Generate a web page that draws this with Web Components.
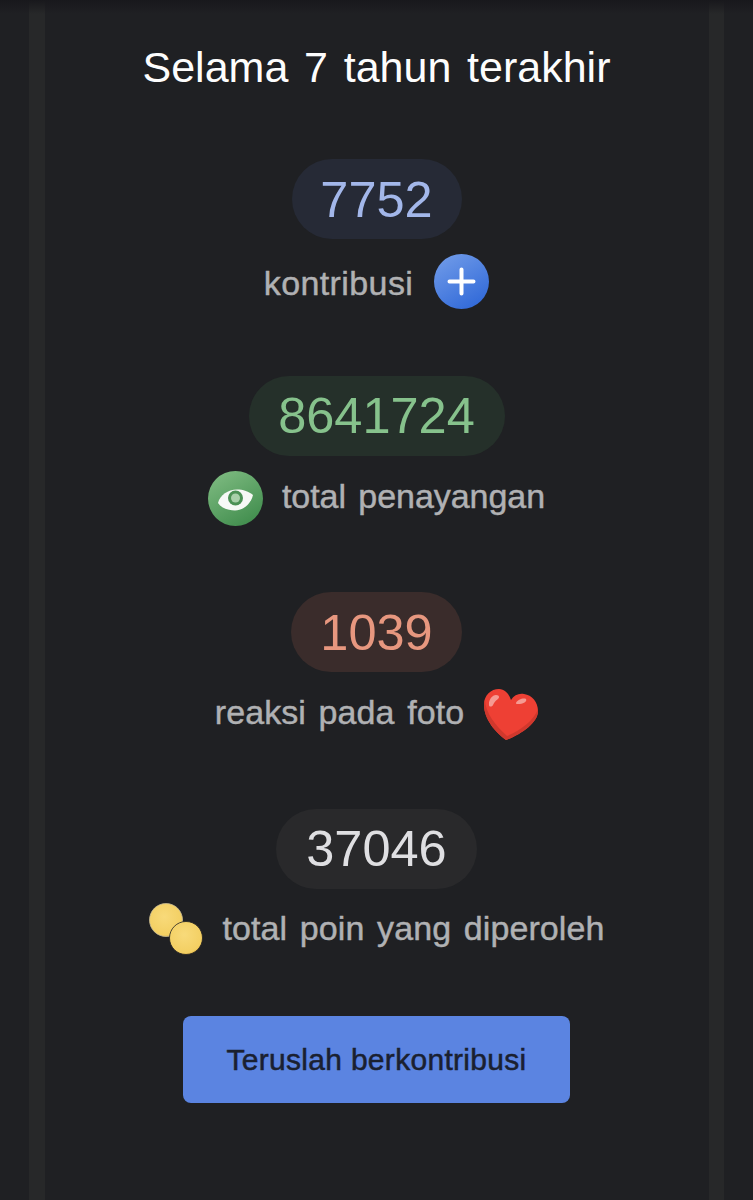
<!DOCTYPE html>
<html lang="id">
<head>
<meta charset="utf-8">
<title>Selama 7 tahun terakhir</title>
<style>
  html, body { margin: 0; background: #1f2023; }
  body { font-family: "Liberation Sans", Arial, sans-serif; }
</style>
</head>
<body>
<recap-page>
  <stat-block value="7752" tone="blue" label="kontribusi" pill-width="170" gap="21" style="--label-spacing: 0.4px; --label-top: 4px; --label-bottom: 0px">
    <stat-icon slot="after" name="plus"></stat-icon>
  </stat-block>
  <stat-block value="8641724" tone="green" label="total penayangan" pill-width="256" gap="19" style="--label-spacing: -0.05px">
    <stat-icon slot="before" name="eye"></stat-icon>
  </stat-block>
  <stat-block value="1039" tone="red" label="reaksi pada foto" pill-width="171" gap="20">
    <stat-icon slot="after" name="heart"></stat-icon>
  </stat-block>
  <stat-block value="37046" tone="grey" label="total poin yang diperoleh" pill-width="201" gap="20" style="--label-bottom: 6px">
    <stat-icon slot="before" name="coins"></stat-icon>
  </stat-block>
</recap-page>

<script>
class RecapPage extends HTMLElement {
  constructor() {
    super();
    this.attachShadow({ mode: "open" }).innerHTML = `
      <style>
        :host {
          display: grid;
          grid-template-columns: 29px 16px 1fr 15px 29px;
          height: 1200px;
          overflow: hidden;
          background: #1f2023;
          position: relative;
        }
        .strip { background: #272829; }
        .shade {
          position: absolute;
          inset: 0 0 auto 0;
          height: 14px;
          background: linear-gradient(#18181c, rgba(24, 24, 28, 0));
        }
        main {
          display: flex;
          flex-direction: column;
          align-items: center;
          min-width: 0;
          padding-right: 1px;
        }
        h1 {
          margin: 42px 0 0;
          font: 400 43px/50px "Liberation Sans", Arial, sans-serif;
          word-spacing: 3.8px;
          color: #fdfdfd;
          white-space: nowrap;
        }
        .stats {
          display: flex;
          flex-direction: column;
          align-items: center;
          gap: 66.67px;
          margin-top: 67px;
          width: 100%;
        }
        recap-button { margin-top: 57px; }
      </style>
      <div></div>
      <div class="strip"></div>
      <main>
        <h1>Selama 7 tahun terakhir</h1>
        <div class="stats"><slot></slot></div>
        <recap-button>Teruslah berkontribusi</recap-button>
      </main>
      <div class="strip"></div>
      <div></div>
      <div class="shade"></div>
    `;
  }
}

const TONES = {
  blue: { bg: "#262a36", fg: "#a3b7ea" },
  green: { bg: "#25302a", fg: "#86c28c" },
  red: { bg: "#3a2c2b", fg: "#e7977f" },
  grey: { bg: "#29292b", fg: "#dfdfe2" },
};

class StatBlock extends HTMLElement {
  constructor() {
    super();
    this.attachShadow({ mode: "open" }).innerHTML = `
      <style>
        :host {
          display: flex;
          flex-direction: column;
          align-items: center;
          width: 100%;
        }
        .pill {
          display: flex;
          align-items: center;
          justify-content: center;
          box-sizing: border-box;
          height: 80px;
          padding-top: 1px;
          border-radius: 40px;
          font-size: 50.5px;
          line-height: 78px;
        }
        .row {
          display: flex;
          align-items: center;
          height: 55px;
          margin-top: 15px;
          font-size: 34px;
          letter-spacing: var(--label-spacing, 0.1px);
          word-spacing: 3px;
          -webkit-text-stroke: 0.45px #b0b1b3;
          color: #b0b1b3;
          white-space: nowrap;
        }
        .label {
          margin-top: var(--label-top, 0);
          margin-bottom: var(--label-bottom, 4px);
        }
      </style>
      <div class="pill"></div>
      <div class="row">
        <slot name="before"></slot>
        <span class="label"></span>
        <slot name="after"></slot>
      </div>
    `;
  }

  connectedCallback() {
    const tone = TONES[this.getAttribute("tone")];
    const pill = this.shadowRoot.querySelector(".pill");
    pill.textContent = this.getAttribute("value");
    pill.style.width = this.getAttribute("pill-width") + "px";
    pill.style.background = tone.bg;
    pill.style.color = tone.fg;
    this.shadowRoot.querySelector(".label").textContent = this.getAttribute("label");
    this.shadowRoot.querySelector(".row").style.gap = this.getAttribute("gap") + "px";
  }
}

const ICONS = {
  plus: `<svg viewBox="0 0 55 55" width="55" height="55">
      <defs><linearGradient id="g" x1="0.2" y1="0" x2="0.8" y2="1">
        <stop offset="0" stop-color="#6f9ae8"/><stop offset="1" stop-color="#2f68d8"/>
      </linearGradient></defs>
      <circle cx="27.500" cy="27.500" r="27.500" fill="url(#g)"/>
      <path d="M27.500 15.500v24M15.500 27.500h24" stroke="#fff" stroke-width="4" stroke-linecap="round"/>
    </svg>`,
  eye: `<svg viewBox="0 0 55 55" width="55" height="55">
      <defs><linearGradient id="g" x1="0.2" y1="0" x2="0.8" y2="1">
        <stop offset="0" stop-color="#7dba80"/><stop offset="1" stop-color="#3f8c4c"/>
      </linearGradient></defs>
      <circle cx="27.500" cy="27.500" r="27.500" fill="url(#g)"/>
      <path d="M10 32C12 24 20 18.500 29 18.500c6 0 12 2 16 5.500-2 9-10 15.500-18 15.500-7 0-14-2.500-17-7.500z" fill="#f7f9f6"/>
      <circle cx="27.500" cy="27" r="7.500" fill="#4c9155"/>
      <circle cx="27.500" cy="27" r="4.500" fill="#a9d0aa"/>
    </svg>`,
  heart: `<svg viewBox="0 0 54 52" width="54" height="52">
      <path d="M22 51C12 44 0 30 0 16 0 6 7 0 15 0c6 0 10 5 12 11 3-5 8-7 13-6 8 1 14 8 14 17 0 12-18 24-32 29z" fill="#ee4034"/>
      <path d="M22 51C12 44 0 30 0 16c0-2 .3-4 1-6 0 14 11 27 22 37 12-5 27-15 31-27 .2 1 0 2 0 2 0 12-18 24-32 29z" fill="#d0382d"/>
      <path d="M5 16c-.5-5 3-10 7-10 3 0 4 2 2 4-3 2-4 4-5 6-1 2-4 2-4 0zM32 14c1-3 6-5 9-4.500 2 .5 1.500 3-.5 4-2 1-4 1.500-7 1.500-1 0-2-.5-1.500-1z" fill="#f59a92"/>
    </svg>`,
  coins: `<svg viewBox="0 0 54 52" width="54" height="52">
      <defs>
        <radialGradient id="g" cx="0.45" cy="0.4" r="0.65">
          <stop offset="0" stop-color="#f8da7a"/><stop offset="0.85" stop-color="#f3cf62"/><stop offset="1" stop-color="#d6a536"/>
        </radialGradient>
      </defs>
      <circle cx="17" cy="17" r="16.500" fill="url(#g)" stroke="#c9bd95" stroke-width="0.800"/>
      <circle cx="37" cy="35" r="16.500" fill="url(#g)" stroke="#1f2023" stroke-width="0.800"/>
    </svg>`,
};

class StatIcon extends HTMLElement {
  constructor() {
    super();
    this.attachShadow({ mode: "open" });
  }

  connectedCallback() {
    const name = this.getAttribute("name");
    this.shadowRoot.innerHTML = `
      <style>
        :host { display: flex; align-items: center; flex: none; }
        :host([name="coins"]) { margin-bottom: 4px; }
        svg { display: block; }
      </style>
      ${ICONS[name]}
    `;
  }
}

class RecapButton extends HTMLElement {
  constructor() {
    super();
    this.attachShadow({ mode: "open" }).innerHTML = `
      <style>
        :host {
          display: flex;
          align-items: center;
          justify-content: center;
          box-sizing: border-box;
          width: 387px;
          height: 87px;
          padding-top: 2px;
          border-radius: 8px;
          background: #5b84e1;
          color: #1a2030;
          font-size: 30px;
          letter-spacing: 0.3px;
          -webkit-text-stroke: 0.5px #1a2030;
          white-space: nowrap;
        }
      </style>
      <slot></slot>
    `;
  }
}

window.customElements.define("stat-icon", StatIcon);
window.customElements.define("stat-block", StatBlock);
window.customElements.define("recap-button", RecapButton);
window.customElements.define("recap-page", RecapPage);
</script>
</body>
</html>
